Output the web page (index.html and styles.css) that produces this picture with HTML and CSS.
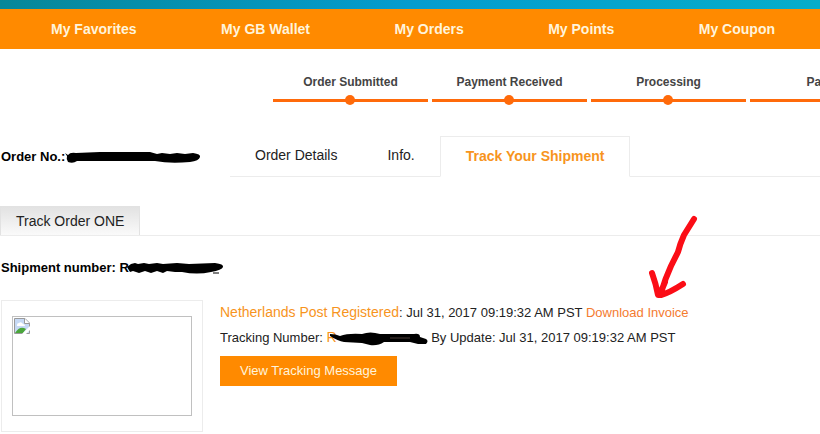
FILE: index.html
```html
<!DOCTYPE html>
<html lang="en">
<head>
  <meta charset="UTF-8" />
  <meta name="viewport" content="width=device-width, initial-scale=1.0" />
  <title>Track Your Shipment</title>
  <link rel="stylesheet" href="styles.css">
</head>
<body>
  <div class="top-strip"></div>
  <nav class="main-nav">
    <a href="#">My Favorites</a>
    <a href="#">My GB Wallet</a>
    <a href="#">My Orders</a>
    <a href="#">My Points</a>
    <a href="#">My Coupon</a>
  </nav>

  <ol class="steps">
    <li>Order Submitted</li>
    <li>Payment Received</li>
    <li>Processing</li>
    <li>Packed</li>
  </ol>

  <div class="order-bar">
    <div class="order-no">
      <span>Order No.:</span>
      <svg class="marker" width="138" height="14" viewBox="0 0 138 14">
        <path d="M0 3 L3 5 Q5 2 11 3 L35 2 L85 2 L92 4 L97 3 L105 4 L112 3 L120 4 L128 3 Q136 4 135 7 Q134 11 125 12 Q105 14 90 11 L12 11 Q8 14 3 12 Q1 9 2 6 Z" />
      </svg>
    </div>
    <div class="tabs">
      <a href="#">Order Details</a>
      <a href="#">Info.</a>
      <a href="#" class="active">Track Your Shipment</a>
    </div>
  </div>

  <div class="sub-tabs">
    <a href="#">Track Order ONE</a>
  </div>

  <p class="shipment-no">
    <span>Shipment number: R</span>
    <svg class="marker number" width="98" height="14" viewBox="0 0 98 14">
      <path d="M0 6 L4 3 L8 2 L11 3 L17 2 L22 3 L30 2 L36 3 L50 2 L62 3 L88 2 Q97 3 96 6 Q95 9 84 11 Q70 14 55 11 L48 11 L40 10 L36 12 L30 10 L24 12 L18 10 L12 12 L6 10 L3 11 Z" />
      <path d="M86 12 H92" stroke="#000" stroke-width="1" />
    </svg>
  </p>

  <div class="shipment">
    <div class="thumb">
      <div class="thumb-image">
        <!-- missing image icon -->
        <svg width="16" height="16" viewBox="0 0 16 16">
          <path d="M.5 .5 H11 L15.500 5 V15.500 H.5 Z" fill="#c6d9f5" stroke="#9a9a9a" />
          <path d="M3 7 Q3 5 5 5 Q7 3 9 6 Q11 6 11 8 H3 Z" fill="#fff" />
          <path d="M1 15 Q6 7 12 11 L9 15 Z" fill="#4ba63b" />
          <path d="M10.500 .5 V5.500 H15.500" fill="#fff" stroke="#9a9a9a" />
          <path d="M8 16 L16 8 V12 L12 16 Z" fill="#fff" />
        </svg>
      </div>
    </div>
    <div class="details">
      <p><a href="#" class="carrier">Netherlands Post Registered</a>: Jul 31, 2017 09:19:32 AM PST <a href="#" class="invoice">Download Invoice
        <svg class="arrow" width="54" height="88" viewBox="0 0 54 88">
          <path d="M45 5 Q40 13 35 21 Q31 30 29 38 L22 52 Q16 65 12 79 M3 59 Q7 70 9 81 L12 81 Q20 79 34 70 M11 80 L16 68" fill="none" stroke="#fb0d16" stroke-width="6" stroke-linecap="round" stroke-linejoin="round" />
        </svg></a></p>
      <p>Tracking Number: <a href="#" class="carrier">R</a><svg class="marker tracking" width="98" height="14" viewBox="0 0 98 14">
        <path d="M0 2 Q6 2 10 4 Q18 1 32 2 Q40 -1 50 2 L84 2 Q90 1 90 5 L96 7 Q99 9 96 12 L88 12 L80 10 L54 10 Q48 14 40 13 L32 11 L14 10 Q8 9 0 4 Z" />
        <path d="M60 6 H80" stroke="#4a3d38" stroke-width="1" />
      </svg> By Update: Jul 31, 2017 09:19:32 AM PST</p>
      <button type="button">View Tracking Message</button>
    </div>
  </div>
</body>
</html>
```

FILE: styles.css
```css
body {
  margin: 0;
  font-family: "Liberation Sans", Arial, sans-serif;
  font-size: 13px;
  line-height: 20px;
  color: #222;
  background: #fff;
  overflow-x: hidden;
}
a {
  text-decoration: none;
  color: #222;
}
p {
  margin: 0;
}
.top-strip {
  height: 9px;
  background: linear-gradient(to right, #078798, #049cce 50%, #06adca);
}
.main-nav {
  display: flex;
  justify-content: space-between;
  padding: 0 45px 0 51px;
  background: #ff8a00;
}
.main-nav a {
  color: #fff4dc;
  font-size: 14px;
  font-weight: bold;
  line-height: 40px;
  white-space: nowrap;
}
.steps {
  display: flex;
  gap: 4px;
  margin: 0;
  padding: 23px 0 0 273px;
  list-style: none;
  overflow: hidden;
}
.steps li {
  position: relative;
  flex: 0 0 155px;
  padding-bottom: 13px;
  font-size: 12px;
  font-weight: bold;
  text-align: center;
  color: #444;
  background: linear-gradient(#ff6a0a, #ff6a0a) 0 27px / 100% 3px no-repeat;
}
.steps li::after {
  content: "";
  position: absolute;
  left: 72px;
  bottom: 0;
  width: 10px;
  height: 10px;
  border-radius: 50%;
  background: #ff6a0a;
}
.order-bar {
  display: flex;
  margin-top: 31px;
}
.order-no {
  display: flex;
  align-items: center;
  flex: 0 0 229px;
  padding-left: 1px;
  font-weight: bold;
  color: #000;
}
.marker {
  flex: none;
}
.number {
  margin-left: -2px;
}
.tabs {
  display: flex;
  flex: 1;
  border-bottom: 1px solid #ececec;
}
.tabs a {
  padding: 0 25px;
  font-size: 14px;
  line-height: 39px;
}
.tabs .active {
  margin-bottom: -1px;
  border: 1px solid #ececec;
  border-bottom-color: #fff;
  font-weight: bold;
  color: #f7941d;
}
.sub-tabs {
  display: flex;
  margin-top: 29px;
  border-bottom: 1px solid #ececec;
}
.sub-tabs a {
  padding: 0 15px;
  border: 1px solid #e2e2e2;
  border-bottom: 0;
  background: linear-gradient(#e2e2e2, #fafafa);
  font-size: 14px;
  line-height: 28px;
}
.shipment-no {
  display: flex;
  align-items: center;
  margin-top: 22px;
  padding-left: 1px;
  font-weight: bold;
  color: #000;
}
.shipment {
  display: flex;
  gap: 17px;
  margin-top: 22px;
  padding-left: 1px;
}
.thumb {
  padding: 15px 10px;
  border: 1px solid #ececec;
}
.thumb-image {
  box-sizing: border-box;
  width: 180px;
  height: 100px;
  padding: 1px;
  border: 1px solid #c0c0c0;
}
.thumb-image svg {
  display: block;
}
.details p {
  line-height: 25px;
  white-space: nowrap;
}
.carrier {
  font-size: 14px;
  color: #f7941d;
}
.invoice {
  position: relative;
  color: #f47b30;
}
.arrow {
  position: absolute;
  right: -14px;
  bottom: 18px;
  pointer-events: none;
}
.tracking {
  margin-left: -7px;
  vertical-align: middle;
}
.details button {
  margin-top: 6px;
  padding: 0 20px;
  border: 0;
  background: #ff8a00;
  color: #fff4dc;
  font-family: inherit;
  font-size: 13px;
  line-height: 30px;
  cursor: pointer;
}
```
